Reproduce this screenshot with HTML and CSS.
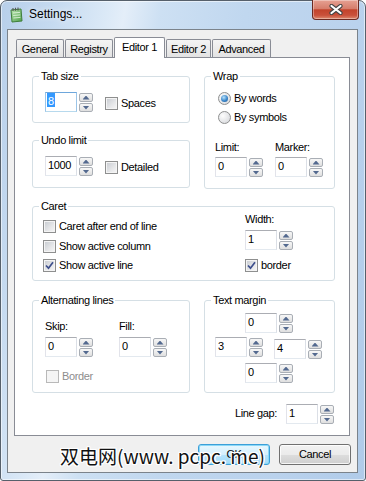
FILE: index.html
```html
<!DOCTYPE html>
<html>
<head>
<meta charset="utf-8">
<link rel="stylesheet" href="styles.css">
</head>
<body>
<div class="window">
  <div class="titlebar">
    <svg class="ticon" width="14" height="16" viewBox="0 0 14 16">
      <defs><linearGradient id="gg" x1="0" y1="0" x2="1" y2="1"><stop offset="0" stop-color="#b9e6b0"/><stop offset="1" stop-color="#4f9f49"/></linearGradient></defs>
      <path d="M2 3 L12 2 L13 14 L3 15 Z" fill="url(#gg)" stroke="#3f7e3a" stroke-width="1"/>
      <path d="M4 6 L11 5.4 M4.2 8.5 L11.2 7.9 M4.4 11 L11.4 10.4" stroke="#e8f7e4" stroke-width="0.8"/>
      <path d="M4 1 V4 M6.5 0.8 V3.8 M9 0.6 V3.6" stroke="#555" stroke-width="1.1"/>
    </svg>
    <span class="title">Settings...</span>
    <div class="close">
      <svg width="16" height="11" viewBox="0 0 16 11"><path d="M3.5 2 L12.5 9 M12.5 2 L3.5 9" stroke="#444" stroke-width="4.2" stroke-linecap="round"/><path d="M3.5 2 L12.5 9 M12.5 2 L3.5 9" stroke="#fff" stroke-width="2.2" stroke-linecap="round"/></svg>
    </div>
  </div>
  <div class="client">
    <div class="tabs">
      <div class="tab t1">General</div>
      <div class="tab t2">Registry</div>
      <div class="tab active t3">Editor 1</div>
      <div class="tab t4">Editor 2</div>
      <div class="tab t5">Advanced</div>
    </div>
    <div class="panel">
      <div class="row1">
        <div class="colL">
          <div class="group g-tab">
            <div class="legend">Tab size</div>
            <div class="hrow">
              <div class="spin"><div class="edit focus"><span class="hl">8</span></div><div class="ud"><span class="up"></span><span class="dn"></span></div></div>
              <div class="check"><span class="cb"></span><span>Spaces</span></div>
            </div>
          </div>
          <div class="group g-undo">
            <div class="legend">Undo limit</div>
            <div class="hrow">
              <div class="spin"><div class="edit">1000</div><div class="ud"><span class="up"></span><span class="dn"></span></div></div>
              <div class="check"><span class="cb"></span><span>Detailed</span></div>
            </div>
          </div>
        </div>
        <div class="group g-wrap">
          <div class="legend">Wrap</div>
          <div class="radio r1"><span class="rb on"></span><span>By words</span></div>
          <div class="radio r2"><span class="rb"></span><span>By symbols</span></div>
          <div class="lm">
            <div class="field"><span class="lbl">Limit:</span><div class="spin"><div class="edit">0</div><div class="ud"><span class="up"></span><span class="dn"></span></div></div></div>
            <div class="field"><span class="lbl">Marker:</span><div class="spin"><div class="edit">0</div><div class="ud"><span class="up"></span><span class="dn"></span></div></div></div>
          </div>
        </div>
      </div>
      <div class="group g-caret">
        <div class="legend">Caret</div>
        <div class="caret-body">
          <div class="caret-left">
            <div class="check"><span class="cb"></span><span>Caret after end of line</span></div>
            <div class="check"><span class="cb"></span><span>Show active column</span></div>
            <div class="check"><span class="cb"><svg width="11" height="11" viewBox="0 0 11 11"><path d="M2 5.5 L4.5 8.2 L9 2.2" fill="none" stroke="#3d4f8c" stroke-width="1.7"/></svg></span><span>Show active line</span></div>
          </div>
          <div class="caret-right">
            <span class="lbl">Width:</span>
            <div class="spin"><div class="edit">1</div><div class="ud"><span class="up"></span><span class="dn"></span></div></div>
            <div class="check"><span class="cb"><svg width="11" height="11" viewBox="0 0 11 11"><path d="M2 5.5 L4.5 8.2 L9 2.2" fill="none" stroke="#3d4f8c" stroke-width="1.7"/></svg></span><span>border</span></div>
          </div>
        </div>
      </div>
      <div class="row3">
        <div class="group g-alt">
          <div class="legend">Alternating lines</div>
          <div class="sf">
            <div class="field"><span class="lbl">Skip:</span><div class="spin"><div class="edit">0</div><div class="ud"><span class="up"></span><span class="dn"></span></div></div></div>
            <div class="field"><span class="lbl">Fill:</span><div class="spin"><div class="edit">0</div><div class="ud"><span class="up"></span><span class="dn"></span></div></div></div>
          </div>
          <div class="check disabled"><span class="cb"></span><span>Border</span></div>
        </div>
        <div class="group g-margin">
          <div class="legend">Text margin</div>
          <div class="spin m1"><div class="edit">0</div><div class="ud"><span class="up"></span><span class="dn"></span></div></div>
          <div class="m2">
            <div class="spin"><div class="edit">3</div><div class="ud"><span class="up"></span><span class="dn"></span></div></div>
            <div class="spin mr"><div class="edit">4</div><div class="ud"><span class="up"></span><span class="dn"></span></div></div>
          </div>
          <div class="spin m3"><div class="edit">0</div><div class="ud"><span class="up"></span><span class="dn"></span></div></div>
        </div>
      </div>
      <div class="linegap">
        <span class="lbl">Line gap:</span>
        <div class="spin"><div class="edit">1</div><div class="ud"><span class="up"></span><span class="dn"></span></div></div>
      </div>
    </div>
    <div class="buttons">
      <div class="btn default">OK</div>
      <div class="btn">Cancel</div>
    </div>
  </div>
  <div class="watermark">双电网(www. pcpc. me)</div>
</div>
</body>
</html>
```
FILE: styles.css
```css
* { box-sizing: border-box; }
html, body { margin: 0; padding: 0; background: #fff; }
body {
  width: 366px; height: 481px; overflow: hidden;
  font-family: "Liberation Sans", Arial, sans-serif;
  font-size: 11px; letter-spacing: -0.35px; color: #000;
}
.window {
  position: relative; width: 366px; height: 481px;
  border: 1px solid #56606b; border-radius: 7px 7px 3px 3px;
  background: linear-gradient(100deg, #b7cfea 0%, #c5daf0 12%, #dbe9f7 24%, #e4eef9 28%, #cde0f3 36%, #c0d7ef 55%, #bad2ed 80%, #b0cbe9 100%);
  box-shadow: inset 0 0 0 1px rgba(255,255,255,.55);
  display: flex; flex-direction: column;
}
.titlebar { height: 28px; display: flex; align-items: flex-start; flex: none; }
.ticon { margin: 6px 0 0 8px; flex: none; }
.title { margin: 6px 0 0 6px; font-size: 12px; line-height: 15px; letter-spacing: 0; text-shadow: 0 0 6px rgba(255,255,255,.95); }
.close {
  margin: -1px 6px 0 auto; width: 47px; height: 20px;
  border: 1px solid #6b2a22; border-top: none; border-radius: 0 0 4px 4px;
  background: linear-gradient(#e6a193 0%, #d67e6c 45%, #c2432c 52%, #c9503a 80%, #dd8a6f 100%);
  box-shadow: inset 0 0 0 1px rgba(255,255,255,.35);
  display: flex; align-items: center; justify-content: center;
}
.client {
  flex: 1; margin: 0 7px 7px 6px; border: 1px solid #7b838b; background: #f0f0f0;
  display: flex; flex-direction: column; padding-top: 7px;
}
.tabs { height: 20px; display: flex; align-items: flex-end; gap: 1px; padding-left: 8px; flex: none; }
.tab {
  height: 18px; border: 1px solid #898c95; border-bottom: none; border-radius: 2px 2px 0 0;
  background: linear-gradient(#f4f4f4, #e3e3e3);
  padding-top: 1px; line-height: 16px; text-align: center; flex: none;
}
.t1 { width: 48px; } .t2 { width: 48px; } .t3 { width: 51px; } .t4 { width: 45px; } .t5 { width: 59px; }
.tab.active { height: 21px; margin-bottom: -1px; background: #fff; position: relative; z-index: 1; }
.panel {
  height: 379px; margin: 0 7px 0 6px; border: 1px solid #898c95; background: #fff;
  padding: 18px 14px 0 17px; display: flex; flex-direction: column; flex: none;
}
.row1 { display: flex; gap: 14px; flex: none; }
.colL { width: 158px; display: flex; flex-direction: column; gap: 17px; }
.group { border: 1px solid #d5dfe5; border-radius: 3px; display: flex; flex-direction: column; flex: none; }
.legend { align-self: flex-start; margin: -7px 0 0 6px; padding: 0 2px; background: #fff; line-height: 13px; height: 13px; white-space: nowrap; }
.g-tab { height: 47px; }
.g-undo { height: 48px; }
.g-wrap { width: 131px; height: 113px; }
.hrow { display: flex; align-items: flex-start; margin: 9px 0 0 12px; }
.hrow .check { margin: 5px 0 0 12px; }

.spin { display: flex; gap: 2px; flex: none; align-self: flex-start; }
.edit {
  width: 32px; height: 20px; border: 1px solid; border-color: #abadb3 #dbdfe6 #e3e9ef #e2e3ea;
  background: #fff; padding: 2px 0 0 2px; line-height: 12px; white-space: nowrap;
}
.edit.focus { border-color: #6ea7dc #9cc5e8 #b7d9ed #9cc5e8; }
.hl { display: inline-block; vertical-align: top; margin: -2px 0 0 -1px; padding: 2px 1px 0; height: 14px; background: #3399ff; color: #fff; }
.ud { display: flex; flex-direction: column; gap: 1px; margin-top: 1px; }
.ud span {
  width: 14px; height: 9px; border: 1px solid #a9aeb5; border-radius: 2px;
  background: linear-gradient(#f7f7f7, #dfdfdf);
  display: flex; align-items: center; justify-content: center;
}
.ud span::after { content: ""; width: 7px; height: 4px; background: #53698f; }
.ud .up::after { clip-path: polygon(50% 0, 100% 100%, 0 100%); }
.ud .dn::after { clip-path: polygon(0 0, 100% 0, 50% 100%); }

.check { display: flex; align-items: flex-start; gap: 3px; line-height: 13px; white-space: nowrap; }
.cb {
  width: 13px; height: 13px; border: 1px solid #8e8f8f; flex: none; position: relative;
  background: linear-gradient(135deg, #c6cad0 0%, #e6e7e9 60%, #f7f7f7 100%);
  box-shadow: inset 0 0 0 1px #f4f4f4;
}
.cb svg { position: absolute; left: 0; top: 0; }
.check.disabled { color: #8d8d8d; }
.check.disabled .cb { border-color: #b9b9b9; background: #f5f5f5; box-shadow: none; }
.radio { display: flex; align-items: flex-start; gap: 3px; line-height: 13px; white-space: nowrap; margin-left: 13px; }
.rb {
  width: 13px; height: 13px; border-radius: 50%; border: 1px solid #8e8f8f; flex: none;
  background: radial-gradient(circle at 35% 35%, #fdfdfd, #d2d4d8);
  display: flex; align-items: center; justify-content: center;
}
.rb.on::after { content: ""; width: 7px; height: 7px; border-radius: 50%; background: radial-gradient(circle at 40% 35%, #b8e2fb, #3a86ca 55%, #1c538f); }
.r1 { margin-top: 9px; }
.r2 { margin-top: 6px; }
.lm { display: flex; gap: 12px; margin: 17px 0 0 10px; }
.field { display: flex; flex-direction: column; }
.lbl { line-height: 13px; white-space: nowrap; }
.lm .spin { margin-top: 3px; }

.g-caret { margin-top: 17px; height: 75px; }
.caret-body { display: flex; }
.caret-left { width: 212px; padding-left: 10px; display: flex; flex-direction: column; }
.caret-left .check:nth-child(1) { margin-top: 7px; }
.caret-left .check:nth-child(2) { margin-top: 7px; }
.caret-left .check:nth-child(3) { margin-top: 6px; }
.caret-right { display: flex; flex-direction: column; }
.caret-right .spin { margin-top: 4px; }
.caret-right .check { margin-top: 9px; }

.row3 { display: flex; gap: 14px; margin-top: 19px; flex: none; }
.g-alt { width: 158px; height: 93px; }
.g-margin { width: 131px; height: 93px; }
.sf { display: flex; gap: 26px; margin: 13px 0 0 12px; }
.sf .spin { margin-top: 4px; }
.g-alt .check { margin: 13px 0 0 13px; }
.m1 { margin: 6px 0 0 40px; }
.m2 { display: flex; align-items: flex-start; gap: 11px; margin: 4px 0 0 10px; }
.m2 .mr { margin-top: 2px; }
.m3 { margin: 4px 0 0 40px; }

.linegap { display: flex; justify-content: flex-end; align-items: flex-start; gap: 9px; margin: 11px 1px 0 0; }
.linegap .lbl { margin-top: 3px; }

.buttons { display: flex; justify-content: flex-end; gap: 9px; margin: 8px 6px 0 0; flex: none; }
.btn {
  width: 72px; height: 21px; border: 1px solid #707070; border-radius: 3px;
  background: linear-gradient(#f2f2f2 0%, #ebebeb 50%, #dddddd 51%, #cfcfcf 100%);
  box-shadow: inset 0 0 0 1px rgba(255,255,255,.8);
  text-align: center; line-height: 19px;
}
.btn.default {
  border-color: #3c9fd8;
  background: linear-gradient(#e8f7fe 0%, #d3effd 50%, #b6e4fc 51%, #a3dbf8 100%);
  box-shadow: inset 0 0 0 1px #8ad8f8;
}
.watermark {
  position: absolute; left: 59px; top: 443px; z-index: 5;
  font-family: "Noto Sans CJK SC", "Liberation Sans", sans-serif;
  font-size: 19px; line-height: 24px; letter-spacing: 0; color: #111; white-space: nowrap;
  text-shadow: 1px 0 0 #fff, -1px 0 0 #fff, 0 1px 0 #fff, 0 -1px 0 #fff, 1px 1px 0 #fff, -1px -1px 0 #fff, 1px -1px 0 #fff, -1px 1px 0 #fff, 0 0 3px #fff;
}
```
